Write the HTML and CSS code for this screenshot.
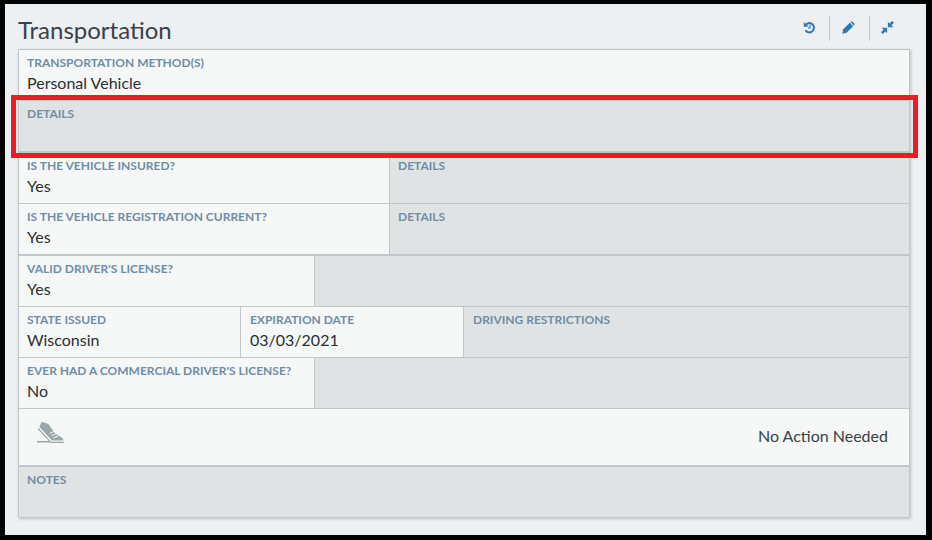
FILE: index.html
```html
<!DOCTYPE html>
<html>
<head>
  <title>Transportation</title>
  <link rel="stylesheet" href="styles.css">
</head>
<body>
  <div class="panel">
    <header class="panel-head">
      <h1>Transportation</h1>
      <div class="tools">
        <span class="tool">
          <svg width="13" height="13" viewBox="0 0 14 14"><path d="M3.200 3.800A5 5 0 1 1 2.600 10" fill="none" stroke="#2f78b5" stroke-width="2.200"/><path d="M.8 1v5.200H6z" fill="#2f78b5"/><path d="M7.600 4.200v3.400H5.400" fill="none" stroke="#2f78b5" stroke-width="1.200"/></svg>
        </span>
        <span class="tool tool-pencil">
          <svg width="13" height="13" viewBox="0 0 14 14"><path d="M.4 13.600l.9-4.600L8.400 1.900l3.700 3.700-7.100 7.100z" fill="#2f78b5"/><path d="M9.400 .9l1.300-.7 3.100 3.100-.7 1.300-.3.300-3.700-3.700z" fill="#2f78b5"/></svg>
        </span>
        <span class="tool tool-last">
          <svg width="13" height="13" viewBox="0 0 14 14"><path d="M7.400 6.600V.8l1.900 1.900L12 0l2 2-2.700 2.700 1.900 1.900zM6.600 7.400v5.800l-1.900-1.900L2 14l-2-2 2.700-2.700L.8 7.400z" fill="#2f78b5"/></svg>
        </span>
      </div>
    </header>

    <div class="card">
      <div class="row">
        <div class="cell">
          <label>Transportation Method(s)</label>
          <div class="value">Personal Vehicle</div>
        </div>
      </div>
      <div class="row row-details">
        <div class="cell off"><label>Details</label></div>
      </div>
      <div class="row">
        <div class="cell w-371">
          <label>Is the vehicle insured?</label>
          <div class="value">Yes</div>
        </div>
        <div class="cell off"><label>Details</label></div>
      </div>
      <div class="row heavy">
        <div class="cell w-371">
          <label>Is the vehicle registration current?</label>
          <div class="value">Yes</div>
        </div>
        <div class="cell off"><label>Details</label></div>
      </div>
      <div class="row">
        <div class="cell w-296">
          <label>Valid driver's license?</label>
          <div class="value">Yes</div>
        </div>
        <div class="cell off"></div>
      </div>
      <div class="row">
        <div class="cell w-222">
          <label>State issued</label>
          <div class="value">Wisconsin</div>
        </div>
        <div class="cell w-223 inset">
          <label>Expiration date</label>
          <div class="value">03/03/2021</div>
        </div>
        <div class="cell off inset"><label>Driving restrictions</label></div>
      </div>
      <div class="row">
        <div class="cell w-296">
          <label>Ever had a commercial driver's license?</label>
          <div class="value">No</div>
        </div>
        <div class="cell off"></div>
      </div>
      <div class="action heavy">
        <svg width="28" height="22" viewBox="0 0 28 22">
          <path d="M0 20h13v1.500H0z" fill="#9aa8aa"/>
          <path d="M4.700.7L11.300 3 18 12.300l7.700 5 .6 2.200H15L2.300 5.700z" fill="#9aa8aa"/>
          <path d="M1 7.500L14 21.300h13" fill="none" stroke="#9aa8aa" stroke-width="1.200"/>
          <path d="M12.500 12.500l4.500-2M14.500 14.800l4.500-2M16.500 17l4.500-2" stroke="#f6f8f8" stroke-width="1"/>
        </svg>
        <span class="status">No Action Needed</span>
      </div>
      <div class="row row-notes">
        <div class="cell off"><label>Notes</label></div>
      </div>
    </div>

    <div class="callout"></div>
  </div>
</body>
</html>
```

FILE: styles.css
```css
html, body {
  margin: 0;
  padding: 0;
}

body {
  background-color: #000;
  width: 932px;
  height: 540px;
  box-sizing: border-box;
  padding: 4px 6px 5px 5px;
  font-family: Lato, sans-serif;
  overflow: hidden;
}

.panel {
  position: relative;
  height: 100%;
  background-color: #edf0f2;
  padding: 0 16px 0 13px;
  box-sizing: border-box;
}

.panel-head {
  display: flex;
  justify-content: space-between;
  height: 45px;
}

h1 {
  margin: 0;
  padding-top: 11px;
  font-size: 24px;
  line-height: 30px;
  font-weight: 400;
  color: #3a4147;
}

.tools {
  display: flex;
  align-items: flex-start;
  padding: 12px 1px 0 0;
}

.tool {
  display: flex;
  justify-content: center;
  width: 40px;
  height: 25px;
  padding-top: 5px;
  box-sizing: border-box;
  border-left: 1px solid #c1c6ca;
}

.tool:first-child {
  border-left: none;
}

.tool-pencil {
  padding-right: 2px;
}

.tool-last {
  padding-right: 4px;
}

.card {
  border: 1px solid #c1c6ca;
  box-shadow: 1px 1px 3px rgba(0, 0, 0, 0.2);
  background-color: #f6f8f8;
}

.row {
  display: flex;
  height: 51px;
  border-bottom: 1px solid #c1c6ca;
  box-sizing: border-box;
}

.row-details {
  height: 52px;
  border-bottom-width: 2px;
}

.heavy {
  border-bottom-width: 2px;
  height: 52px;
}

.row-notes {
  height: 50px;
  border-bottom: none;
}

.cell {
  flex: none;
  box-sizing: border-box;
  padding: 5px 8px 0;
  border-right: 1px solid #c1c6ca;
}

.cell:last-child {
  border-right: none;
}

.off {
  flex: 1;
  background-color: #e0e3e4;
}

.inset {
  padding-left: 9px;
}

.w-371 { width: 371px; }
.w-296 { width: 296px; }
.w-222 { width: 222px; }
.w-223 { width: 223px; }

.cell:not(.off):only-child {
  flex: 1;
}

label {
  display: block;
  font-size: 12px;
  line-height: 16px;
  font-weight: 700;
  text-transform: uppercase;
  color: #6f8da6;
  margin-bottom: 1px;
}

.value {
  font-size: 16px;
  line-height: 22px;
  color: #2a2e31;
}

.action {
  display: flex;
  align-items: flex-start;
  justify-content: space-between;
  height: 58px;
  border-bottom: 2px solid #c1c6ca;
  box-sizing: border-box;
  padding: 12px 21px 0 18px;
}

.status {
  font-size: 16px;
  line-height: 22px;
  padding-top: 4px;
  color: #3a4147;
}

/* red annotation box drawn over the details row */
.callout {
  position: absolute;
  left: 6px;
  top: 91px;
  width: 907px;
  height: 63px;
  box-sizing: border-box;
  border: 5px solid #ed1c24;
}
```
